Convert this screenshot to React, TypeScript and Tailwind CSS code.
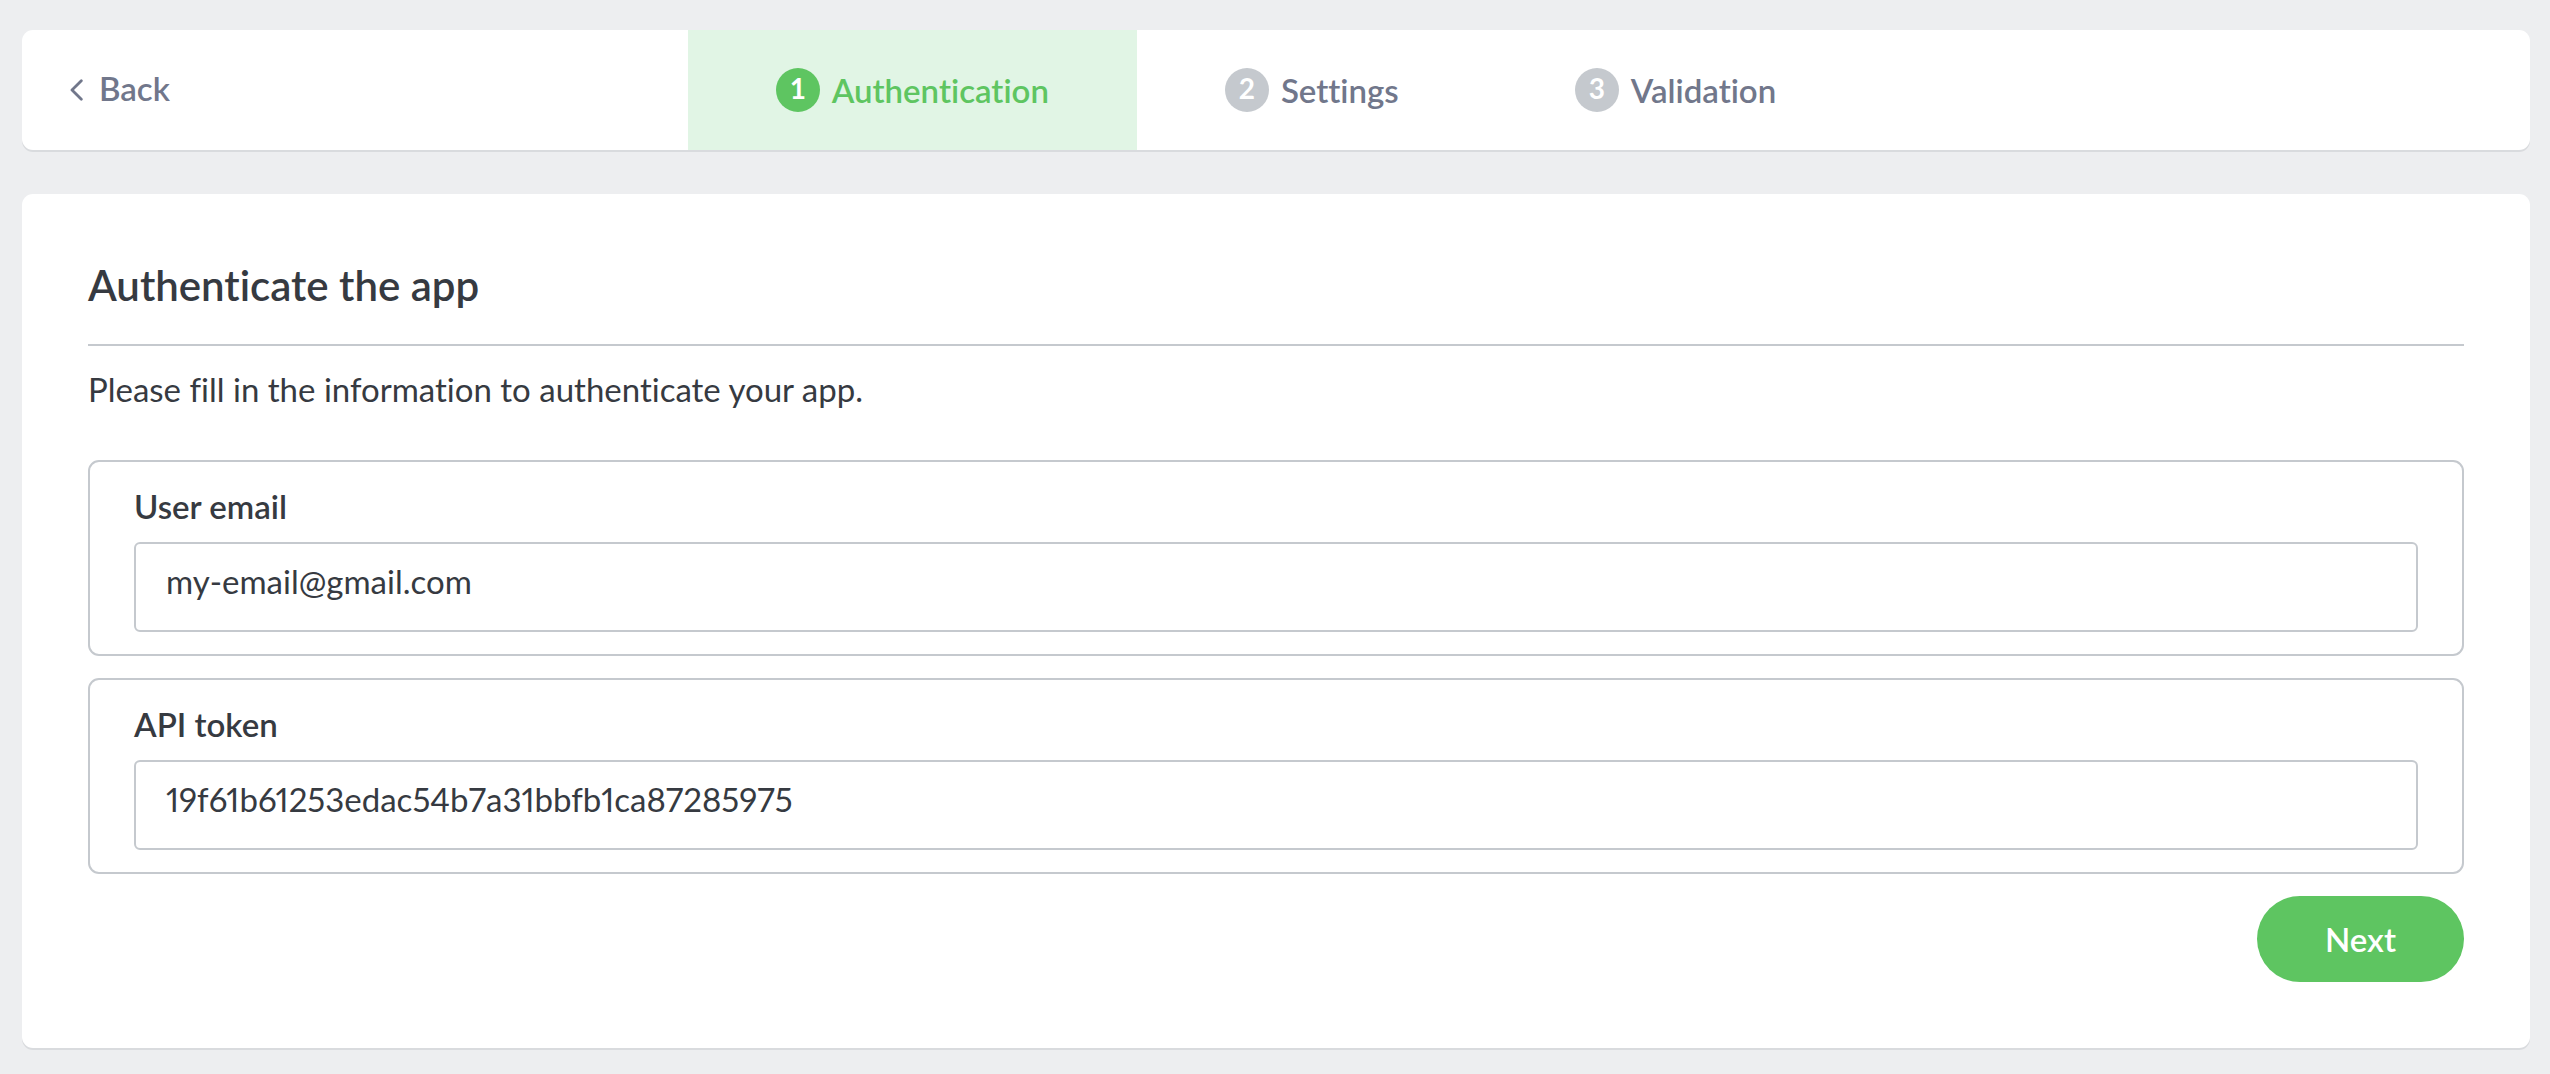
import React, { useState } from "react";

const STEPS = ["Authentication", "Settings", "Validation"];

function Stepper({ current, onSelect }: { current: number; onSelect: (index: number) => void }) {
  return (
    <ol className="flex items-stretch">
      {STEPS.map((label, index) => {
        const active = index === current;
        return (
          <li key={label} className="flex">
            <button
              type="button"
              aria-current={active ? "step" : undefined}
              onClick={() => onSelect(index)}
              className={`flex items-center gap-3 px-[88px] text-[33px] leading-[44px] font-semibold ${
                active ? "bg-[#e1f5e5] text-[#5ec561]" : "text-[#71778b]"
              }`}
            >
              <span
                className={`flex size-11 items-center justify-center rounded-full pb-1 text-[28px] leading-[40px] font-bold text-white ${
                  active ? "bg-[#5ec561]" : "bg-[#c5c9ce]"
                }`}
              >
                {index + 1}
              </span>
              {label}
            </button>
          </li>
        );
      })}
    </ol>
  );
}

function Field({ id, label, type, defaultValue }: { id: string; label: string; type: string; defaultValue: string }) {
  return (
    <div className="flex flex-col gap-3.5 rounded-[11px] border-2 border-[#c5c9ce] px-11 py-[22px]">
      <label htmlFor={id} className="text-[33px] leading-[44px] font-semibold">
        {label}
      </label>
      <input
        id={id}
        type={type}
        defaultValue={defaultValue}
        className="h-[90px] w-full rounded-md border-2 border-[#c5c9ce] bg-white px-[30px] pb-3 text-[33px] proportional-nums outline-none focus:border-[#5ec561]"
      />
    </div>
  );
}

export default function App() {
  const [step, setStep] = useState(0);

  return (
    <div className="flex min-h-screen flex-col gap-11 bg-[#edeef0] pt-[30px] pr-5 pb-[26px] pl-[22px] font-['Lato',sans-serif] text-[#363a41] [font-variant-ligatures:none]">
      <nav
        aria-label="Setup steps"
        className="grid min-h-[120px] grid-cols-[1fr_auto_1fr] items-stretch rounded-[11px] bg-white shadow-[0_2px_0_#d9dbde]"
      >
        <button
          type="button"
          className="flex items-center gap-4 justify-self-start pb-1 pl-12 text-[33px] leading-[44px] font-semibold text-[#71778b]"
        >
          <svg width="13" height="22" viewBox="0 0 13 22" fill="none" aria-hidden="true" className="mt-1">
            <path
              d="M11.3 1.7 2 11l9.3 9.3"
              stroke="currentColor"
              strokeWidth="2.8"
              strokeLinecap="round"
              strokeLinejoin="round"
            />
          </svg>
          Back
        </button>
        <Stepper current={step} onSelect={setStep} />
      </nav>

      <main className="rounded-[11px] bg-white p-[66px] shadow-[0_2px_0_#d9dbde]">
        <h1 className="border-b-2 border-[#c5c9ce] pb-[34px] text-[42px] leading-[50px] font-semibold">
          Authenticate the app
        </h1>
        <p className="mt-5 text-[33px] leading-[46px]">Please fill in the information to authenticate your app.</p>
        <form className="mt-12 flex flex-col gap-[22px]" onSubmit={(event) => event.preventDefault()}>
          <Field id="user-email" label="User email" type="email" defaultValue="my-email@gmail.com" />
          <Field id="api-token" label="API token" type="text" defaultValue="19f61b61253edac54b7a31bbfb1ca87285975" />
          <button
            type="submit"
            className="h-[86px] self-end rounded-full bg-[#5ec561] px-[68px] text-[33px] leading-[44px] font-semibold text-white"
          >
            Next
          </button>
        </form>
      </main>
    </div>
  );
}
